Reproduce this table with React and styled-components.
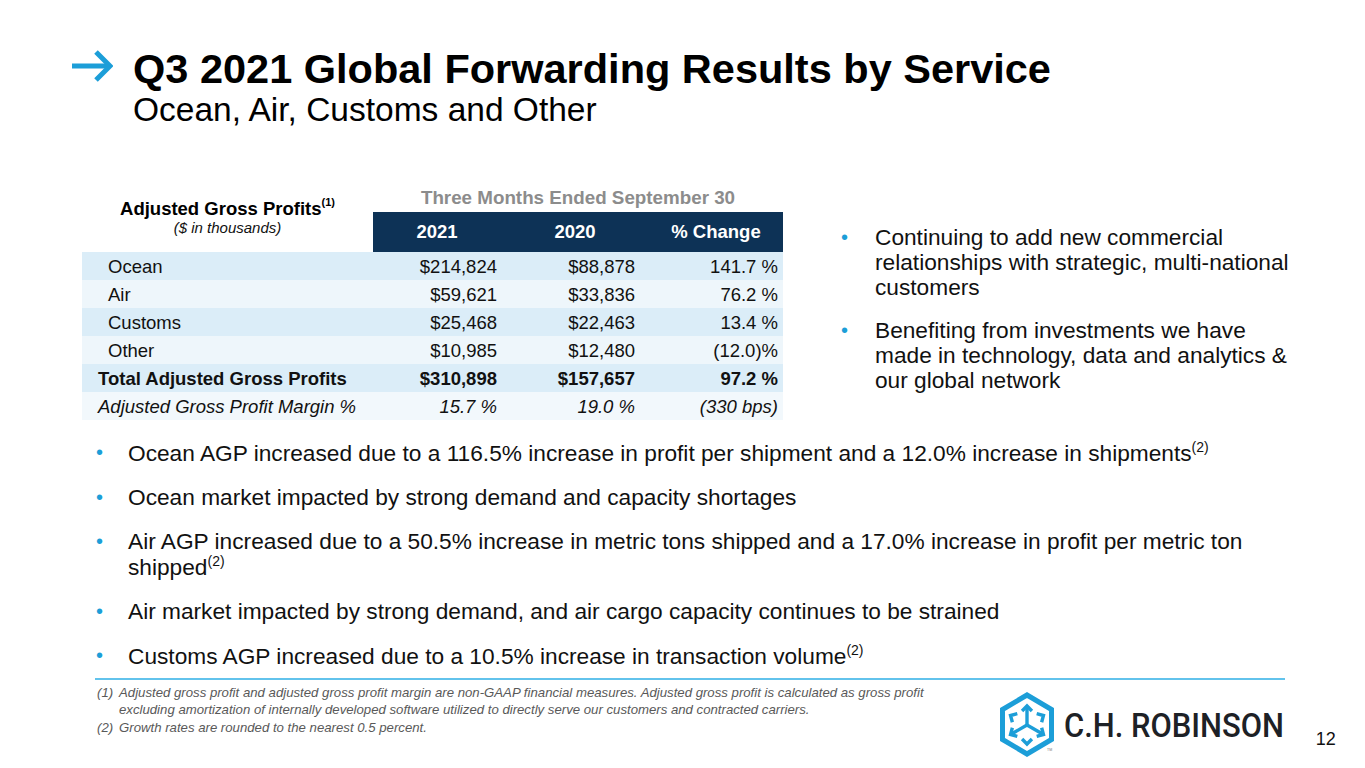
import React from 'react';
import styled, { createGlobalStyle } from 'styled-components';

const GlobalStyle = createGlobalStyle`
  * {
    margin: 0;
    padding: 0;
    box-sizing: border-box;
  }
  body {
    background: #ffffff;
    font-family: 'Liberation Sans', Arial, sans-serif;
    color: #000;
  }
`;

const BLUE = '#1c9ed8';

const Slide = styled.div`
  width: 1365px;
  height: 768px;
  overflow: hidden;
  display: flex;
  flex-direction: column;
`;

const Header = styled.header`
  display: flex;
  align-items: flex-start;
  gap: 20px;
  padding: 48px 0 0 71px;
`;

const ArrowMark = styled.svg`
  width: 42px;
  height: 34px;
  margin-top: 1px;
  flex: none;
`;

const Title = styled.h1`
  font-size: 41.5px;
  line-height: 1;
  font-weight: 700;
`;

const Subtitle = styled.h2`
  font-size: 33.5px;
  line-height: 1.2;
  font-weight: 400;
`;

const Middle = styled.section`
  display: flex;
  align-items: flex-start;
  margin-top: 54px;
  padding-left: 82px;
`;

const Table = styled.div`
  display: grid;
  grid-template-columns: 291px 128px 148px 134px;
  grid-template-rows: 28px 40px repeat(6, 28px);
  width: 701px;
  font-size: 18.5px;
  flex: none;
`;

const LabelHead = styled.div`
  grid-row: 1 / span 2;
  display: flex;
  flex-direction: column;
  align-items: center;
  padding-top: 16px;
  line-height: 1;

  strong {
    font-weight: 700;
    font-size: 18.5px;
  }
  sup {
    font-size: 11px;
    line-height: 0;
    vertical-align: 9px;
  }
  em {
    margin-top: 2px;
    font-size: 15px;
    color: #111;
  }
`;

const PeriodHead = styled.div`
  grid-column: 2 / span 3;
  display: flex;
  align-items: center;
  justify-content: center;
  color: #8c8c8c;
  font-weight: 700;
  font-size: 18.8px;
`;

const YearHead = styled.div`
  background: #0d3256;
  color: #fff;
  font-weight: 700;
  display: flex;
  align-items: center;
  justify-content: center;
`;

const Cell = styled.div`
  display: flex;
  align-items: center;
  justify-content: ${p => (p.$label ? 'flex-start' : 'flex-end')};
  background: ${p => p.$bg};
  padding-left: ${p => (p.$label ? p.$indent : 0)}px;
  padding-right: ${p => (p.$label ? 0 : p.$pad)}px;
  padding-top: 3px;
  font-weight: ${p => (p.$bold ? 700 : 400)};
  font-style: ${p => (p.$italic ? 'italic' : 'normal')};
  white-space: nowrap;
  color: #111;
`;

const SideList = styled.ul`
  list-style: none;
  margin: 41px 0 0 60px;
  width: 458px;
  display: flex;
  flex-direction: column;
  gap: 18px;
`;

const Item = styled.li`
  display: grid;
  grid-template-columns: ${p => p.$indent}px 1fr;
  font-size: 22.7px;
  line-height: 25px;
  color: #111;

  &::before {
    content: '•';
    color: ${BLUE};
    font-size: 20px;
    margin-left: -2px;
  }

  sup {
    font-size: 14px;
    line-height: 1;
    vertical-align: 9px;
  }
`;

const MainList = styled.ul`
  list-style: none;
  margin: 20px 0 0 98px;
  display: flex;
  flex-direction: column;
  gap: 19px;
  width: 1180px;
`;

const Footer = styled.footer`
  margin-top: 9px;
  display: flex;
  flex-direction: column;
`;

const Divider = styled.div`
  margin-left: 95px;
  width: 1190px;
  height: 2px;
  background: #62c3ec;
`;

const FooterRow = styled.div`
  display: flex;
  align-items: flex-start;
  padding: 4px 0 0 97px;
`;

const Notes = styled.ol`
  list-style: none;
  width: 842px;
  display: flex;
  flex-direction: column;
  gap: 1px;
  flex: none;
`;

const Note = styled.li`
  display: grid;
  grid-template-columns: 22px 1fr;
  font-size: 13.2px;
  line-height: 17px;
  font-style: italic;
  color: #595959;
`;

const Logo = styled.div`
  display: flex;
  align-items: center;
  gap: 10px;
  margin: 8px 0 0 61px;
`;

const LogoMark = styled.svg`
  width: 54px;
  height: 66px;
  flex: none;
`;

const LogoText = styled.span`
  display: inline-block;
  font-family: Roboto, 'Liberation Sans', sans-serif;
  font-weight: 500;
  font-size: 34px;
  color: #1d2126;
  white-space: nowrap;
  transform: scaleX(0.91);
  transform-origin: left center;
`;

const PageNum = styled.span`
  font-size: 18px;
  color: #111;
  margin: 45px 0 0 10px;
`;

const rows = [
  { label: 'Ocean', v: ['$214,824', '$88,878', '141.7 %'] },
  { label: 'Air', v: ['$59,621', '$33,836', '76.2 %'] },
  { label: 'Customs', v: ['$25,468', '$22,463', '13.4 %'] },
  { label: 'Other', v: ['$10,985', '$12,480', '(12.0)%'] },
  { label: 'Total Adjusted Gross Profits', v: ['$310,898', '$157,657', '97.2 %'], bold: true },
  { label: 'Adjusted Gross Profit Margin %', v: ['15.7 %', '19.0 %', '(330 bps)'], italic: true },
];

const bgs = ['#dbedf8', '#eef6fb', '#dbedf8', '#eef6fb', '#dbedf8', '#f2f8fc'];
const pads = [4, 14, 5];

function arrowHead(cx, cy, deg, r, a) {
  const t = (deg * Math.PI) / 180;
  const tx = cx + r * Math.cos(t);
  const ty = cy + r * Math.sin(t);
  const p = s => {
    const u = t + (s * 3 * Math.PI) / 4;
    return `${(tx + a * Math.cos(u)).toFixed(2)},${(ty + a * Math.sin(u)).toFixed(2)}`;
  };
  return `${p(1)} ${tx.toFixed(2)},${ty.toFixed(2)} ${p(-1)}`;
}

function CubeLogo() {
  const cx = 27, cy = 33;
  const stems = [-90, 30, 150];
  const heads = [-90, -30, 30, 90, 150, 210];
  return (
    <LogoMark viewBox="0 0 54 66">
      <polygon
        points="27,3 51.5,17.5 51.5,47.5 27,62 2.5,47.5 2.5,17.5"
        fill="none"
        stroke={BLUE}
        strokeWidth="5"
      />
      {stems.map(d => {
        const t = (d * Math.PI) / 180;
        return (
          <line
            key={d}
            x1={cx}
            y1={cy}
            x2={cx + 19 * Math.cos(t)}
            y2={cy + 19 * Math.sin(t)}
            stroke={BLUE}
            strokeWidth="3.4"
          />
        );
      })}
      {heads.map(d => (
        <polyline
          key={d}
          points={arrowHead(cx, cy, d, 19, 7)}
          fill="none"
          stroke={BLUE}
          strokeWidth="3.4"
        />
      ))}
      <text x="47" y="59" fontSize="3.5" fill="#777" fontFamily="Liberation Sans">TM</text>
    </LogoMark>
  );
}

export default function App() {
  return (
    <Slide>
      <GlobalStyle />
      <Header>
        <ArrowMark viewBox="0 0 42 34">
          <line x1="1" y1="17" x2="38" y2="17" stroke={BLUE} strokeWidth="5" />
          <polyline points="25,3 39,17 25,31" fill="none" stroke={BLUE} strokeWidth="5" />
        </ArrowMark>
        <div>
          <Title>Q3 2021 Global Forwarding Results by Service</Title>
          <Subtitle>Ocean, Air, Customs and Other</Subtitle>
        </div>
      </Header>

      <Middle>
        <Table>
          <LabelHead>
            <strong>
              Adjusted Gross Profits<sup>(1)</sup>
            </strong>
            <em>($ in thousands)</em>
          </LabelHead>
          <PeriodHead>Three Months Ended September 30</PeriodHead>
          <YearHead>2021</YearHead>
          <YearHead>2020</YearHead>
          <YearHead>% Change</YearHead>
          {rows.map((r, i) => (
            <React.Fragment key={r.label}>
              <Cell
                $label
                $bg={bgs[i]}
                $indent={r.bold || r.italic ? 16 : 26}
                $bold={r.bold}
                $italic={r.italic}
              >
                {r.label}
              </Cell>
              {r.v.map((v, j) => (
                <Cell key={j} $bg={bgs[i]} $pad={pads[j]} $bold={r.bold} $italic={r.italic}>
                  {v}
                </Cell>
              ))}
            </React.Fragment>
          ))}
        </Table>

        <SideList>
          <Item $indent={32}>
            Continuing to add new commercial relationships with strategic, multi&#8209;national customers
          </Item>
          <Item $indent={32}>
            Benefiting from investments we have made in technology, data and analytics &amp; our global network
          </Item>
        </SideList>
      </Middle>

      <MainList>
        <Item $indent={30}>
          <span>
            Ocean AGP increased due to a 116.5% increase in profit per shipment and a 12.0% increase in shipments<sup>(2)</sup>
          </span>
        </Item>
        <Item $indent={30}>
          Ocean market impacted by strong demand and capacity shortages
        </Item>
        <Item $indent={30}>
          <span>
            Air AGP increased due to a 50.5% increase in metric tons shipped and a 17.0% increase in profit per metric ton shipped<sup>(2)</sup>
          </span>
        </Item>
        <Item $indent={30}>
          Air market impacted by strong demand, and air cargo capacity continues to be strained
        </Item>
        <Item $indent={30}>
          <span>
            Customs AGP increased due to a 10.5% increase in transaction volume<sup>(2)</sup>
          </span>
        </Item>
      </MainList>

      <Footer>
        <Divider />
        <FooterRow>
          <Notes>
            <Note>
              <span>(1)</span>
              <span>
                Adjusted gross profit and adjusted gross profit margin are non-GAAP financial measures. Adjusted gross profit is calculated as gross profit excluding amortization of internally developed software utilized to directly serve our customers and contracted carriers.
              </span>
            </Note>
            <Note>
              <span>(2)</span>
              <span>Growth rates are rounded to the nearest 0.5 percent.</span>
            </Note>
          </Notes>
          <Logo>
            <CubeLogo />
            <LogoText>C.H. ROBINSON</LogoText>
          </Logo>
          <PageNum>12</PageNum>
        </FooterRow>
      </Footer>
    </Slide>
  );
}
